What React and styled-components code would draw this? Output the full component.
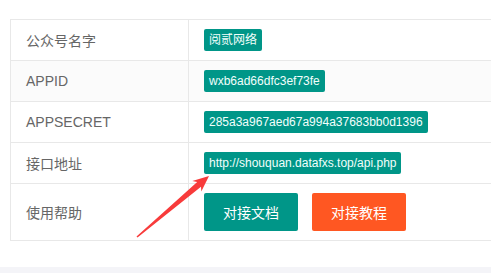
import styled, { createGlobalStyle } from 'styled-components';

const GlobalStyle = createGlobalStyle`
   html, body {
      margin: 0;
      padding: 0;
      background: #f4f4f8;
      overflow: hidden;
   }
   body {
      font-family: 'Liberation Sans', 'Noto Sans CJK SC', sans-serif;
   }
`;

const rows = [
   { label: '公众号名字', value: '阅贰网络' },
   { label: 'APPID', value: 'wxb6ad66dfc3ef73fe', shaded: true },
   { label: 'APPSECRET', value: '285a3a967aed67a994a37683bb0d1396' },
   { label: '接口地址', value: 'http://shouquan.datafxs.top/api.php' },
];

const App = () => {
   return (
      <Page>
         <GlobalStyle />
         <Card>
            <Table>
               <tbody>
                  {rows.map((r) => (
                     <Row key={r.label} $shaded={r.shaded}>
                        <LabelCell>{r.label}</LabelCell>
                        <ValueCell>
                           <Badge>{r.value}</Badge>
                        </ValueCell>
                     </Row>
                  ))}
                  <Row>
                     <LabelCell>使用帮助</LabelCell>
                     <ValueCell $tall>
                        <BtnGroup>
                           <Btn>对接文档</Btn>
                           <Btn $warm>对接教程</Btn>
                        </BtnGroup>
                     </ValueCell>
                  </Row>
               </tbody>
            </Table>
         </Card>

         {/* screenshot annotation arrow */}
         <Arrow viewBox='0 0 491 273' width='491' height='273'>
            <polygon
               fill='#f83b3b'
               points='136.5,236.4 197.2,182.1 192.3,181 209,176 201.3,191.6 201,186.7 137.5,237.6'
            />
         </Arrow>
      </Page>
   );
};

export default App;

const Page = styled.div`
   position: relative;
   min-height: 273px;
`;

const Card = styled.div`
   background: #fff;
   padding: 19px 0 26px 10px;
   overflow: hidden;
`;

const Table = styled.table`
   width: calc(100% + 20px);
   border-collapse: collapse;
   border-spacing: 0;
`;

const Row = styled.tr`
   background: ${(p) => (p.$shaded ? '#fbfbfb' : '#fff')};
`;

const LabelCell = styled.td`
   width: 178px;
   box-sizing: border-box;
   height: 41px;
   padding: 0 15px;
   border: 1px solid #e8e8e8;
   font-size: 14px;
   color: #666;
   vertical-align: middle;
`;

const ValueCell = styled.td`
   height: ${(p) => (p.$tall ? '57px' : '41px')};
   box-sizing: border-box;
   padding: 0 15px;
   border: 1px solid #e8e8e8;
   vertical-align: middle;
`;

const Badge = styled.span`
   display: inline-block;
   height: 22px;
   line-height: 22px;
   padding: 0 5px;
   border-radius: 2px;
   background: #009688;
   color: #f2fffc;
   font-size: 12px;
   white-space: nowrap;
   vertical-align: middle;
`;

const BtnGroup = styled.div`
   display: flex;
   gap: 14px;
`;

const Btn = styled.button`
   height: 38px;
   width: 94px;
   padding: 0;
   border: none;
   border-radius: 2px;
   background: ${(p) => (p.$warm ? '#ff5722' : '#009688')};
   color: #fff;
   font-family: inherit;
   font-size: 14px;
   cursor: pointer;
`;

const Arrow = styled.svg`
   position: absolute;
   top: 0;
   left: 0;
   pointer-events: none;
`;
